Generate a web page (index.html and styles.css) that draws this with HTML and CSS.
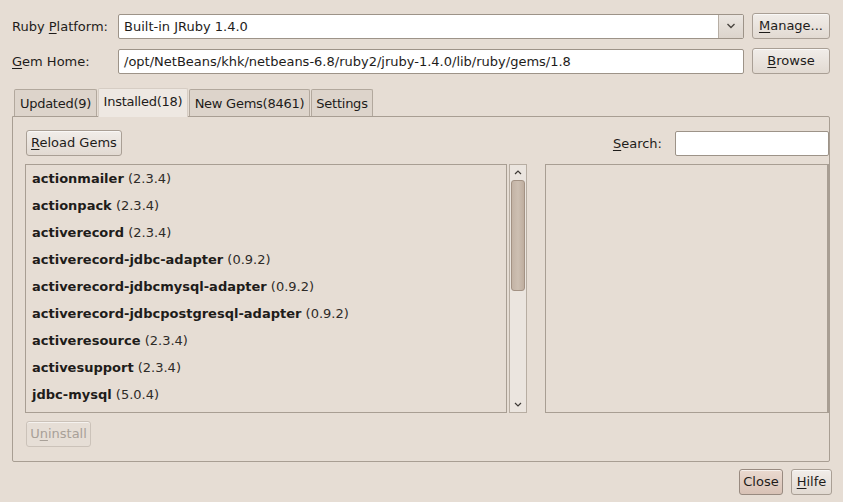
FILE: index.html
```html
<!DOCTYPE html>
<html>
<head>
<meta charset="utf-8">
<link rel="stylesheet" href="styles.css">
</head>
<body>
<div class="dialog">
  <div class="row row1">
    <label class="lbl">Ruby <u>P</u>latform:</label>
    <div class="combo">
      <span class="combo-text">Built-in JRuby 1.4.0</span>
      <span class="combo-btn"><svg width="10" height="6" viewBox="0 0 10 6"><path d="M1.5 1 L5 4.5 L8.5 1" fill="none" stroke="#4a4540" stroke-width="1.4"/></svg></span>
    </div>
    <button class="btn side"><u>M</u>anage...</button>
  </div>
  <div class="row row2">
    <label class="lbl"><u>G</u>em Home:</label>
    <div class="field">/opt/NetBeans/khk/netbeans-6.8/ruby2/jruby-1.4.0/lib/ruby/gems/1.8</div>
    <button class="btn side"><u>B</u>rowse</button>
  </div>
  <div class="tabs">
    <div class="tab t1">Updated(9)</div>
    <div class="tab t2 active">Installed(18)</div>
    <div class="tab t3">New Gems(8461)</div>
    <div class="tab t4">Settings</div>
  </div>
  <div class="panel">
    <div class="toolbar">
      <button class="btn"><u>R</u>eload Gems</button>
      <div class="search">
        <label class="search-lbl"><u>S</u>earch:</label>
        <div class="search-field"></div>
      </div>
    </div>
    <div class="content">
      <div class="listwrap">
        <ul class="list">
          <li><b>actionmailer</b> (2.3.4)</li>
          <li><b>actionpack</b> (2.3.4)</li>
          <li><b>activerecord</b> (2.3.4)</li>
          <li><b>activerecord-jdbc-adapter</b> (0.9.2)</li>
          <li><b>activerecord-jdbcmysql-adapter</b> (0.9.2)</li>
          <li><b>activerecord-jdbcpostgresql-adapter</b> (0.9.2)</li>
          <li><b>activeresource</b> (2.3.4)</li>
          <li><b>activesupport</b> (2.3.4)</li>
          <li><b>jdbc-mysql</b> (5.0.4)</li>
        </ul>
        <div class="scrollbar">
          <div class="arrow"><svg width="8" height="5" viewBox="0 0 8 5"><path d="M1 4 L4 1 L7 4" fill="none" stroke="#3e3a36" stroke-width="1.2"/></svg></div>
          <div class="trough"><div class="thumb"></div></div>
          <div class="arrow"><svg width="8" height="5" viewBox="0 0 8 5"><path d="M1 1 L4 4 L7 1" fill="none" stroke="#3e3a36" stroke-width="1.2"/></svg></div>
        </div>
      </div>
      <div class="details"></div>
    </div>
    <div class="bottom">
      <button class="btn disabled">U<u>n</u>install</button>
    </div>
  </div>
  <div class="footer">
    <button class="btn default fb1">Close</button>
    <button class="btn fb2"><u>H</u>ilfe</button>
  </div>
</div>
</body>
</html>
```
FILE: styles.css
```css
* { box-sizing: border-box; }
html, body {
  margin: 0;
  padding: 0;
  background: #e6ddd4;
}
body {
  font-family: "DejaVu Sans", sans-serif;
  font-size: 13px;
  color: #1e1c1a;
}
u { text-decoration: underline; text-underline-offset: 2px; }
.dialog {
  width: 843px;
  height: 502px;
  padding: 13px 11px 0 12px;
  display: flex;
  flex-direction: column;
}
.row {
  display: flex;
  align-items: center;
  height: 26px;
  padding-right: 2px;
}
.row2 { margin-top: 9px; }
.lbl {
  width: 106px;
  flex: none;
}
.combo {
  flex: 1;
  height: 25px;
  border: 1px solid #9d9388;
  border-radius: 2px;
  background: #fff;
  display: flex;
  align-items: stretch;
  overflow: hidden;
}
.combo-text {
  flex: 1;
  padding-left: 5px;
  line-height: 23px;
}
.combo-btn {
  width: 25px;
  border-left: 1px solid #b7aea4;
  background: linear-gradient(#ebe6e1, #dcd4cc);
  display: flex;
  align-items: center;
  justify-content: center;
}
.field {
  flex: 1;
  height: 25px;
  border: 1px solid #9d9388;
  border-radius: 2px;
  background: #fff;
  padding-left: 5px;
  line-height: 23px;
  white-space: nowrap;
  overflow: hidden;
}
.btn {
  font-family: "DejaVu Sans", sans-serif;
  font-size: 13px;
  color: #1e1c1a;
  height: 26px;
  padding: 0 5px;
  border: 1px solid #a99f95;
  border-radius: 3px;
  background: linear-gradient(#f1ede9, #e2dad2);
  box-shadow: inset 0 1px 0 rgba(255,255,255,0.6);
  line-height: 22px;
  cursor: default;
}
.side {
  width: 78px;
  margin-left: 8px;
  flex: none;
}
.tabs {
  display: flex;
  align-items: flex-end;
  margin-top: 13px;
  padding-left: 2px;
  height: 29px;
}
.tab {
  height: 27px;
  padding: 0;
  text-align: center;
  line-height: 27px;
  letter-spacing: -0.25px;
  border: 1px solid #b2a89d;
  border-bottom: none;
  border-radius: 2px 2px 0 0;
  background: #ddd4cb;
  margin-right: 1px;
  white-space: nowrap;
}
.t1 { width: 83px; }
.t2 { width: 90px; }
.t3 { width: 121px; }
.t4 { width: 62px; }
.tab.active {
  height: 29px;
  line-height: 26px;
  background: #eee8e2;
  border-color: #d6cdc4;
  position: relative;
  top: 1px;
}
.panel {
  height: 346px;
  border: 1px solid #a89e93;
  border-radius: 0 2px 2px 2px;
  padding: 13px 0 0 13px;
  margin-right: 2px;
  display: flex;
  flex-direction: column;
}
.toolbar {
  display: flex;
  align-items: center;
  justify-content: space-between;
  height: 26px;
}
.toolbar .btn { padding: 0 4px; }
.search {
  display: flex;
  align-items: center;
}
.search-lbl { margin-right: 13px; }
.search-field {
  width: 154px;
  height: 25px;
  background: #fff;
  border: 1px solid #9d9388;
  border-radius: 2px;
}
.content {
  display: flex;
  margin-top: 8px;
  margin-left: -1px;
  height: 249px;
}
.listwrap {
  display: flex;
  width: 502px;
  flex: none;
}
.list {
  list-style: none;
  margin: 0;
  padding: 0;
  width: 482px;
  border: 1px solid #a89e93;
  overflow: hidden;
}
.list li {
  height: 27px;
  line-height: 27px;
  padding-left: 6px;
  white-space: nowrap;
  color: #2e2b28;
}
.list b { color: #1e1c1a; }
.scrollbar {
  margin-left: 2px;
  width: 18px;
  border: 1px solid #b7ada2;
  background: #ebe5df;
  display: flex;
  flex-direction: column;
}
.arrow {
  height: 15px;
  display: flex;
  align-items: center;
  justify-content: center;
  flex: none;
}
.trough {
  flex: 1;
  padding: 0 1px;
}
.thumb {
  height: 111px;
  border: 1px solid #a39284;
  border-radius: 3px;
  background: linear-gradient(90deg, #c3b3a5, #cdbfb2 50%, #bfae9f);
}
.details {
  margin-left: 18px;
  flex: 1;
  border: 1px solid #a89e93;
  border-right-width: 2px;
}
.bottom {
  margin-top: 8px;
}
.btn.disabled {
  color: #a8a098;
  border-color: #cbc2b9;
  background: #e6ded6;
  width: 65px;
  padding: 0;
}
.footer {
  display: flex;
  justify-content: flex-end;
  gap: 8px;
  margin-top: 7px;
  margin-right: 0;
}
.footer .btn { padding: 0; }
.fb1 { width: 44px; }
.fb2 { width: 41px; }
.btn.default {
  border-color: #988a80;
  background: linear-gradient(#ead9cf, #d8c2b6);
}
```
